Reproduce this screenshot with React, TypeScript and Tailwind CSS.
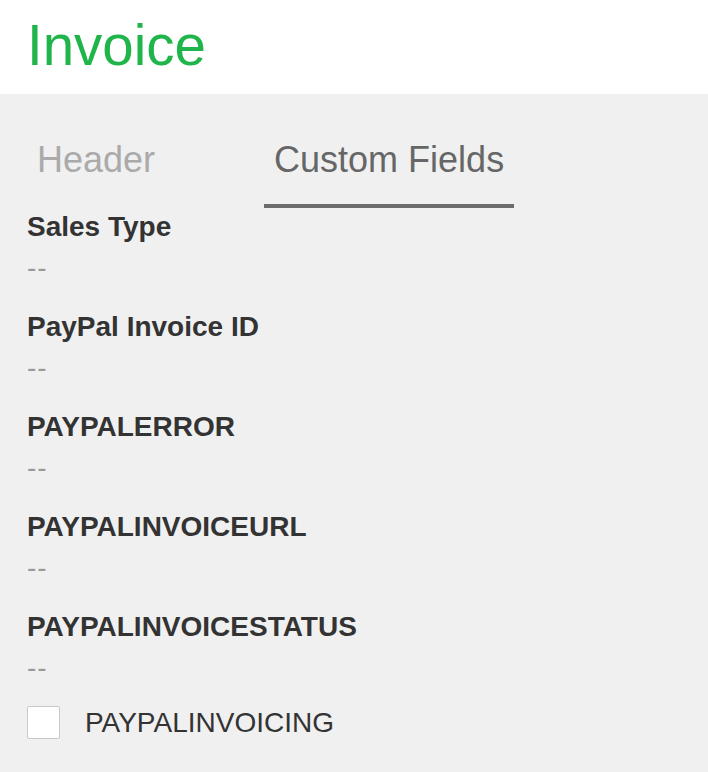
const fields = ["Sales Type", "PayPal Invoice ID", "PAYPALERROR", "PAYPALINVOICEURL", "PAYPALINVOICESTATUS"]

const App = () => {
    return (
        <div className="min-h-[772px] w-full bg-[#f0f0f0] font-['Liberation_Sans',Arial,sans-serif]">
            <div className="h-[94px] bg-white pl-[27px] pt-[18px]">
                <h1 className="text-[56.5px] leading-[56px] text-[#1fb54a]">Invoice</h1>
            </div>

            <div className="flex pt-[46px] pl-[27px]">
                <div className="px-[10px] pb-[28px] text-[36px] leading-[40px] text-[#aaaaaa]">Header</div>
                <div className="ml-[99px] border-b-4 border-[#6b6b6b] px-[10px] pb-[24px] text-[36px] leading-[40px] text-[#666666]">
                    Custom Fields
                </div>
            </div>

            <div className="px-[27px] pt-[3px]">
                {fields.map((f) => (
                    <div key={f} className="mb-[27px]">
                        <div className="text-[28px] font-bold leading-[32px] text-[#333333]">{f}</div>
                        <div className="mt-[9px] text-[28px] leading-[32px] tracking-[1px] text-[#999999]">--</div>
                    </div>
                ))}
                <label className="-mt-[5px] flex items-center">
                    <span className="h-[33px] w-[33px] rounded-[2px] border border-[#c8c8c8] bg-white"></span>
                    <span className="ml-[25px] text-[28px] leading-[33px] text-[#333333]">PAYPALINVOICING</span>
                </label>
            </div>
        </div>
    )
}

export default App
